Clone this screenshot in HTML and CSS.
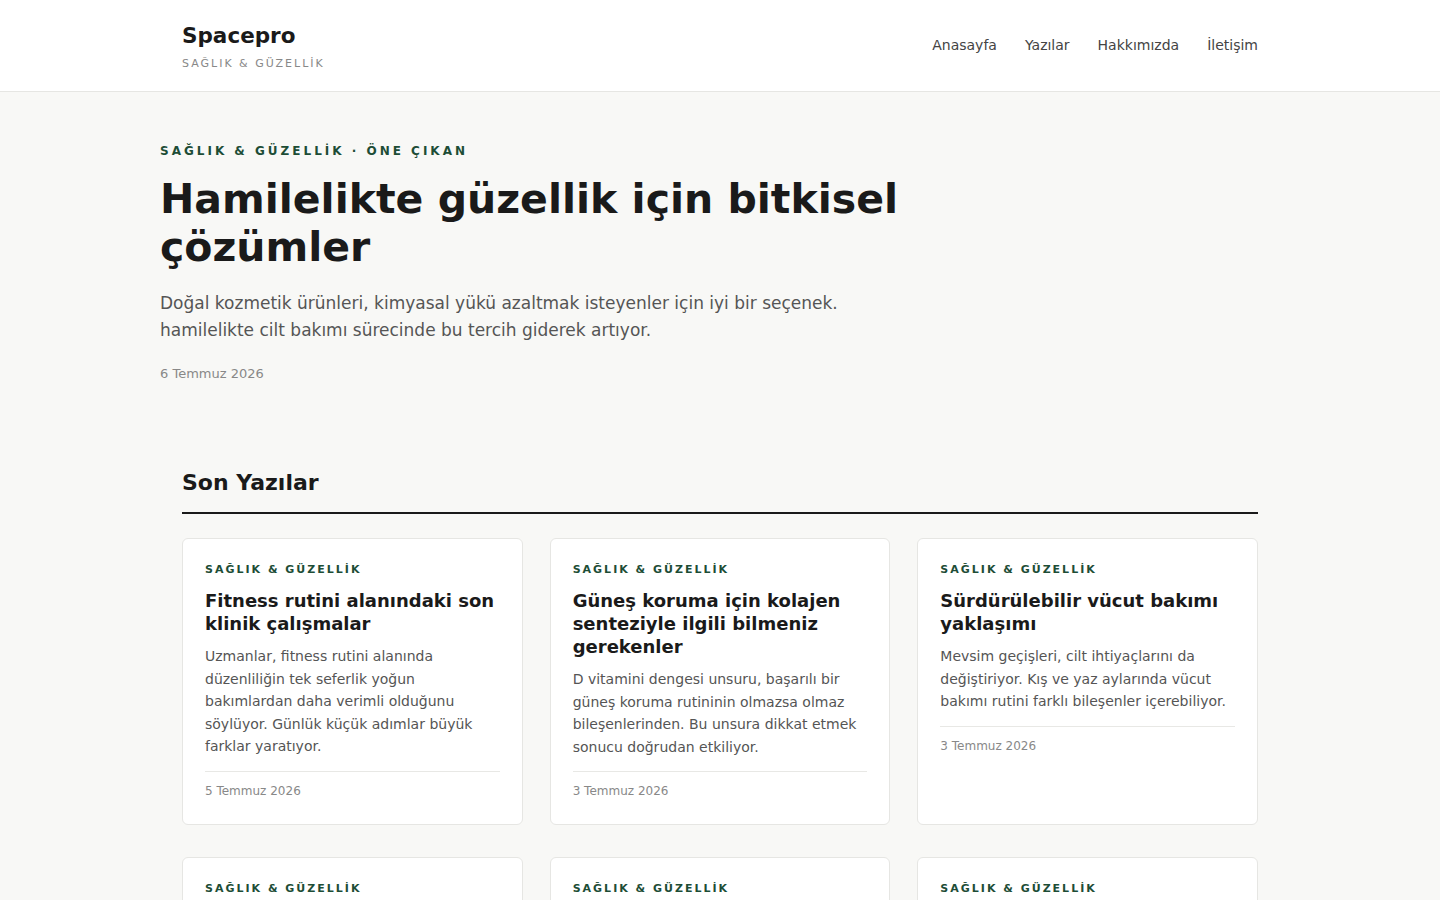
FILE: index.html
```html
<!DOCTYPE html>
<html lang="tr">
<head>
  <meta charset="UTF-8">
  <title>Spacepro - Sağlık & Güzellik</title>
  <link rel="stylesheet" href="styles.css">
</head>
<body>
  <header class="site-header">
    <div class="header-inner">
      <a class="brand" href="#">
        <span class="brand-name">Spacepro</span>
        <span class="brand-tag">Sağlık &amp; Güzellik</span>
      </a>
      <nav class="main-nav">
        <a href="#">Anasayfa</a>
        <a href="#">Yazılar</a>
        <a href="#">Hakkımızda</a>
        <a href="#">İletişim</a>
      </nav>
    </div>
  </header>

  <main>
    <section class="hero">
      <div class="hero-kicker">Sağlık &amp; Güzellik · Öne Çıkan</div>
      <h1 class="hero-title">Hamilelikte güzellik için bitkisel çözümler</h1>
      <p class="hero-lead">Doğal kozmetik ürünleri, kimyasal yükü azaltmak isteyenler için iyi bir seçenek. hamilelikte cilt bakımı sürecinde bu tercih giderek artıyor.</p>
      <div class="hero-date">6 Temmuz 2026</div>
    </section>

    <section class="latest">
      <h2 class="section-title">Son Yazılar</h2>
      <div class="post-grid">
        <article class="post-card">
          <div class="post-cat">Sağlık &amp; Güzellik</div>
          <h3 class="post-title">Fitness rutini alanındaki son klinik çalışmalar</h3>
          <p class="post-excerpt">Uzmanlar, fitness rutini alanında düzenliliğin tek seferlik yoğun bakımlardan daha verimli olduğunu söylüyor. Günlük küçük adımlar büyük farklar yaratıyor.</p>
          <div class="post-date">5 Temmuz 2026</div>
        </article>
        <article class="post-card">
          <div class="post-cat">Sağlık &amp; Güzellik</div>
          <h3 class="post-title">Güneş koruma için kolajen senteziyle ilgili bilmeniz gerekenler</h3>
          <p class="post-excerpt">D vitamini dengesi unsuru, başarılı bir güneş koruma rutininin olmazsa olmaz bileşenlerinden. Bu unsura dikkat etmek sonucu doğrudan etkiliyor.</p>
          <div class="post-date">3 Temmuz 2026</div>
        </article>
        <article class="post-card">
          <div class="post-cat">Sağlık &amp; Güzellik</div>
          <h3 class="post-title">Sürdürülebilir vücut bakımı yaklaşımı</h3>
          <p class="post-excerpt">Mevsim geçişleri, cilt ihtiyaçlarını da değiştiriyor. Kış ve yaz aylarında vücut bakımı rutini farklı bileşenler içerebiliyor.</p>
          <div class="post-date">3 Temmuz 2026</div>
        </article>
        <article class="post-card">
          <div class="post-cat">Sağlık &amp; Güzellik</div>
          <h3 class="post-title">Cilt bariyerini güçlendiren günlük alışkanlıklar</h3>
          <p class="post-excerpt">Nemlendirme ve güneş koruması, sağlıklı bir cilt için temel adımlar arasında yer alıyor.</p>
          <div class="post-date">2 Temmuz 2026</div>
        </article>
        <article class="post-card">
          <div class="post-cat">Sağlık &amp; Güzellik</div>
          <h3 class="post-title">Saç bakımında doğal yağların yeri</h3>
          <p class="post-excerpt">Bitkisel yağlar, saç tellerini besleyerek kırılmaları azaltmaya yardımcı olabiliyor.</p>
          <div class="post-date">1 Temmuz 2026</div>
        </article>
        <article class="post-card">
          <div class="post-cat">Sağlık &amp; Güzellik</div>
          <h3 class="post-title">Uyku düzeninin cilde etkileri</h3>
          <p class="post-excerpt">Yeterli uyku, cildin yenilenme sürecini doğrudan destekliyor.</p>
          <div class="post-date">30 Haziran 2026</div>
        </article>
      </div>
    </section>
  </main>
</body>
</html>
```

FILE: styles.css
```css
body {
  margin: 0;
  padding: 0;
  background: #f8f8f6;
  color: #1a1a1a;
  font-family: "DejaVu Sans", Verdana, sans-serif;
}

a {
  color: inherit;
  text-decoration: none;
}

/* header */
.site-header {
  background: #fff;
  border-bottom: 1px solid #e6e6e3;
}

.header-inner {
  max-width: 1076px;
  margin: 0 auto;
  height: 91px;
  display: flex;
  justify-content: space-between;
  align-items: center;
}

.brand {
  display: flex;
  flex-direction: column;
  gap: 9px;
  margin-top: 2px;
}

.brand-name {
  font-size: 21.5px;
  font-weight: bold;
  color: #1a1a1a;
}

.brand-tag {
  font-size: 11px;
  letter-spacing: 2px;
  text-transform: uppercase;
  color: #888;
}

.main-nav {
  display: flex;
  gap: 28px;
  font-size: 14px;
  color: #444;
  margin-top: -1px;
}

/* featured post */
.hero {
  max-width: 1120px;
  margin: 0 auto;
  padding: 52px 0 0;
}

.hero-kicker {
  font-size: 12px;
  font-weight: bold;
  letter-spacing: 3px;
  text-transform: uppercase;
  color: #1d4d36;
}

.hero-title {
  max-width: 760px;
  margin: 17px 0 0;
  font-size: 41px;
  line-height: 48px;
  font-weight: bold;
  color: #1a1a1a;
}

.hero-lead {
  max-width: 760px;
  margin: 19px 0 0;
  font-size: 17px;
  line-height: 27px;
  color: #555;
}

.hero-date {
  margin-top: 22px;
  font-size: 13px;
  color: #888;
}

/* latest posts */
.latest {
  max-width: 1076px;
  margin: 0 auto;
  padding: 88px 0 40px;
}

.section-title {
  margin: 0;
  padding-bottom: 15px;
  font-size: 22px;
  line-height: 28px;
  border-bottom: 2px solid #1a1a1a;
}

.post-grid {
  display: grid;
  grid-template-columns: repeat(3, 1fr);
  column-gap: 27px;
  row-gap: 32px;
  margin-top: 24px;
}

.post-card {
  background: #fff;
  border: 1px solid #e6e6e3;
  border-radius: 6px;
  padding: 24px 22px 26px;
  display: flex;
  flex-direction: column;
}

.post-cat {
  font-size: 11px;
  font-weight: bold;
  letter-spacing: 2px;
  text-transform: uppercase;
  color: #1d4d36;
}

.post-title {
  margin: 13px 0 0;
  font-size: 18px;
  line-height: 23px;
  font-weight: bold;
}

.post-excerpt {
  margin: 10px 0 0;
  font-size: 14px;
  line-height: 22.5px;
  color: #555;
}

.post-date {
  margin-top: 13px;
  padding-top: 12px;
  border-top: 1px solid #e8e8e5;
  font-size: 12px;
  color: #888;
}
```
